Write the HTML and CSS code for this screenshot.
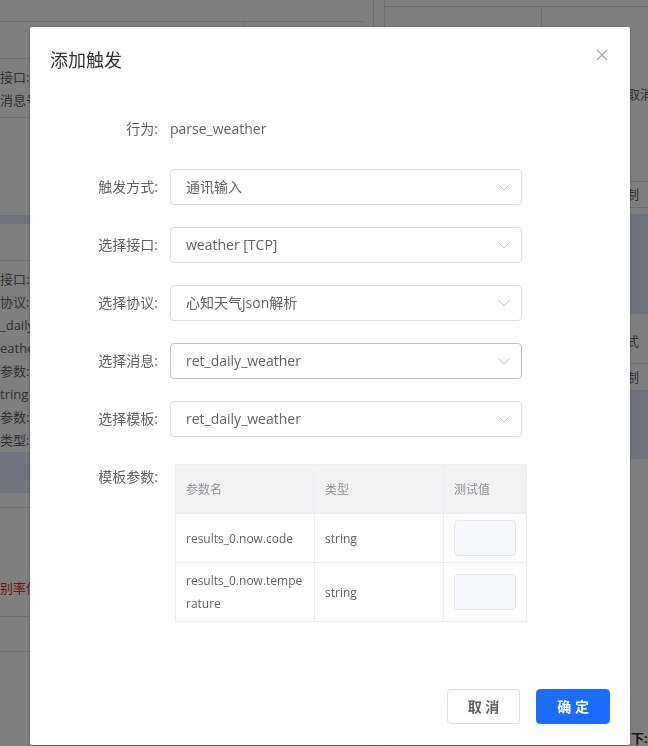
FILE: index.html
```html
<!DOCTYPE html>
<html lang="zh-CN">
<head>
<meta charset="utf-8">
<title>添加触发</title>
<link rel="stylesheet" href="styles.css">
</head>
<body>
<div class="page">
  <div class="pl">
    <div class="pl-r1"></div>
    <div class="pl-r2"><div class="pl-r2-cell"></div></div>
    <div class="pl-r3 bg-text">
      <div>接口:</div>
      <div>消息号:</div>
    </div>
    <div class="pl-r4"></div>
    <div class="band pl-r5"></div>
    <div class="pl-r6"></div>
    <div class="pl-r7 bg-text">
      <div>接口:</div>
      <div>协议:</div>
      <div>_daily</div>
      <div>eather</div>
      <div>参数:</div>
      <div>tring</div>
      <div>参数:</div>
      <div>类型:</div>
    </div>
    <div class="band pl-r8"></div>
    <div class="pl-r9"></div>
    <div class="pl-r10 bg-text"><div class="red">别率低</div></div>
    <div class="pl-r11"></div>
    <div class="pl-r12"></div>
  </div>
  <div class="sep"></div>
  <div class="pr">
    <div class="pr-r1"></div>
    <div class="pr-r2"><div class="pr-r2-cell"></div><div class="pr-text pr-text-a">取消</div></div>
    <div class="pr-r3 pr-text">控制</div>
    <div class="pr-r4"></div>
    <div class="band pr-r5"></div>
    <div class="pr-r6 pr-text">方式</div>
    <div class="pr-r7 pr-text">控制</div>
    <div class="band pr-r8"></div>
    <div class="pr-r9"></div>
    <div class="pr-r10 pr-text">下:三</div>
  </div>
</div>

<div class="mask"></div>

<div class="dialog">
  <div class="dialog-header">
    <span class="dialog-title">添加触发</span>
    <button class="dialog-close" type="button" aria-label="关闭">
      <svg width="12" height="12" viewBox="0 0 12 12"><path d="M1 1 L11 11 M11 1 L1 11" stroke="#a3a6ad" stroke-width="1.2" fill="none"/></svg>
    </button>
  </div>
  <div class="dialog-body">
    <div class="form-item">
      <label class="form-label">行为:</label>
      <div class="form-content"><span class="plain">parse_weather</span></div>
    </div>
    <div class="form-item">
      <label class="form-label">触发方式:</label>
      <div class="form-content">
        <div class="select"><span>通讯输入</span><svg class="arrow" width="12" height="7" viewBox="0 0 12 7"><polyline points="0.5,0.5 6,6 11.5,0.5" fill="none" stroke="#c0c4cc" stroke-width="1"/></svg></div>
      </div>
    </div>
    <div class="form-item">
      <label class="form-label">选择接口:</label>
      <div class="form-content">
        <div class="select"><span>weather [TCP]</span><svg class="arrow" width="12" height="7" viewBox="0 0 12 7"><polyline points="0.5,0.5 6,6 11.5,0.5" fill="none" stroke="#c0c4cc" stroke-width="1"/></svg></div>
      </div>
    </div>
    <div class="form-item">
      <label class="form-label">选择协议:</label>
      <div class="form-content">
        <div class="select"><span>心知天气json解析</span><svg class="arrow" width="12" height="7" viewBox="0 0 12 7"><polyline points="0.5,0.5 6,6 11.5,0.5" fill="none" stroke="#c0c4cc" stroke-width="1"/></svg></div>
      </div>
    </div>
    <div class="form-item">
      <label class="form-label">选择消息:</label>
      <div class="form-content">
        <div class="select select-hover"><span>ret_daily_weather</span><svg class="arrow" width="12" height="7" viewBox="0 0 12 7"><polyline points="0.5,0.5 6,6 11.5,0.5" fill="none" stroke="#c0c4cc" stroke-width="1"/></svg></div>
      </div>
    </div>
    <div class="form-item">
      <label class="form-label">选择模板:</label>
      <div class="form-content">
        <div class="select"><span>ret_daily_weather</span><svg class="arrow" width="12" height="7" viewBox="0 0 12 7"><polyline points="0.5,0.5 6,6 11.5,0.5" fill="none" stroke="#c0c4cc" stroke-width="1"/></svg></div>
      </div>
    </div>
    <div class="form-item">
      <label class="form-label">模板参数:</label>
      <div class="form-content">
        <div class="ptable">
          <div class="cell th">参数名</div>
          <div class="cell th">类型</div>
          <div class="cell th">测试值</div>
          <div class="cell">results_0.now.code</div>
          <div class="cell">string</div>
          <div class="cell"><div class="tinput"></div></div>
          <div class="cell">results_0.now.temperature</div>
          <div class="cell">string</div>
          <div class="cell"><div class="tinput"></div></div>
        </div>
      </div>
    </div>
  </div>
  <div class="dialog-footer">
    <button class="btn" type="button">取 消</button>
    <button class="btn btn-primary" type="button">确 定</button>
  </div>
</div>
</body>
</html>
```
FILE: styles.css
```css
html, body {
  margin: 0;
  padding: 0;
}
body {
  width: 648px;
  height: 746px;
  overflow: hidden;
  position: relative;
  background: #fff;
  font-family: "Open Sans", "Noto Sans CJK SC", sans-serif;
  color: #606266;
}

/* ---------- background page ---------- */
.page {
  display: flex;
  height: 746px;
  overflow: hidden;
}
.pl {
  width: 364px;
  flex: none;
}
.sep {
  width: 10px;
  flex: none;
  margin-left: 9px;
  border-left: 1px solid #dcdfe6;
  border-right: 1px solid #dcdfe6;
}
.pr {
  flex: 1;
  overflow: hidden;
}
.band {
  background: #e2e9f8;
}
.bg-text {
  font-size: 13px;
  line-height: 23px;
  color: #606266;
  white-space: nowrap;
}
.red {
  color: #f01e1e;
}
.pl-r1 { height: 21px; border-bottom: 1px solid #dcdfe6; }
.pl-r2 { height: 36px; border-bottom: 1px solid #dcdfe6; }
.pl-r2-cell { width: 243px; height: 100%; border-right: 1px solid #dcdfe6; }
.pl-r3 { padding: 7px 0 5px; border-bottom: 1px solid #dcdfe6; }
.pl-r4 { height: 97px; }
.pl-r5 { height: 9px; }
.pl-r6 { height: 36px; border-bottom: 1px solid #dcdfe6; }
.pl-r7 { padding-top: 7px; }
.pl-r8 { height: 41px; }
.pl-r9 { height: 14px; border-bottom: 1px solid #dcdfe6; }
.pl-r10 { padding: 69px 0 16px; border-bottom: 1px solid #dcdfe6; }
.pl-r11 { height: 34px; border-bottom: 1px solid #dcdfe6; }
.pl-r12 { height: 90px; }

.pr-text {
  font-size: 13px;
  line-height: 23px;
  color: #606266;
  white-space: nowrap;
  padding-left: 228px;
}
.pr-r1 { height: 6px; border-bottom: 1px solid #dcdfe6; }
.pr-r2 { height: 174px; border-bottom: 1px solid #dcdfe6; position: relative; }
.pr-r2-cell { width: 156px; height: 100%; border-right: 1px solid #dcdfe6; position: absolute; left: 0; top: 0; }
.pr-text-a { padding-top: 76px; padding-left: 242px; }
.pr-r3 { height: 25px; line-height: 25px; border-bottom: 1px solid #dcdfe6; }
.pr-r4 { height: 6px; }
.pr-r5 { height: 100px; }
.pr-r6 { height: 49px; line-height: 54px; border-bottom: 1px solid #dcdfe6; }
.pr-r7 { height: 26px; line-height: 26px; border-bottom: 1px solid #dcdfe6; }
.pr-r8 { height: 68px; }
.pr-r9 { height: 268px; }
.pr-r10 { font-weight: 700; color: #303133; padding-left: 246px; }

.mask {
  position: fixed;
  inset: 0;
  background: rgba(0, 0, 0, 0.5);
}

/* ---------- dialog ---------- */
.dialog {
  position: absolute;
  top: 27px;
  left: 30px;
  width: 600px;
  background: #fff;
  border-radius: 2px;
  box-shadow: 0 1px 3px rgba(0, 0, 0, 0.3);
}
.dialog-header {
  position: relative;
  padding: 20px 20px 10px;
}
.dialog-title {
  display: block;
  font-size: 18px;
  line-height: 24px;
  color: #303133;
  font-family: "Noto Sans CJK SC", sans-serif;
}
.dialog-close {
  position: absolute;
  top: 20px;
  right: 20px;
  width: 16px;
  height: 16px;
  padding: 0;
  border: 0;
  background: transparent;
  display: flex;
  align-items: center;
  justify-content: center;
}
.dialog-body {
  padding: 30px 20px;
}
.form-item {
  display: flex;
  margin-bottom: 22px;
}
.form-label {
  width: 120px;
  flex: none;
  box-sizing: border-box;
  padding-right: 12px;
  text-align: right;
  font-size: 14px;
  line-height: 36px;
  color: #606266;
}
.form-content {
  flex: 1;
  font-size: 14px;
  line-height: 36px;
}
.plain {
  color: #606266;
}
.select {
  width: 352px;
  height: 36px;
  box-sizing: border-box;
  border: 1px solid #dcdfe6;
  border-radius: 4px;
  display: flex;
  align-items: center;
  justify-content: space-between;
  padding: 0 11px 0 15px;
  color: #606266;
  font-size: 14px;
}
.select-hover {
  border-color: #c0c4cc;
}
.arrow {
  display: block;
  flex: none;
}

.ptable {
  margin: 5px 0 0 5px;
  display: grid;
  grid-template-columns: 139px 129px 83px;
  border-top: 1px solid #ebeef5;
  border-left: 1px solid #ebeef5;
  width: max-content;
}
.cell {
  box-sizing: border-box;
  border-right: 1px solid #ebeef5;
  border-bottom: 1px solid #ebeef5;
  padding: 6px 10px;
  font-size: 12px;
  line-height: 23px;
  color: #606266;
  display: flex;
  align-items: center;
  word-break: break-all;
}
.th {
  background: #f2f2f2;
  color: #909399;
  padding: 12px 10px;
  line-height: 24px;
  font-family: "Noto Sans CJK SC", sans-serif;
}
.tinput {
  width: 62px;
  height: 36px;
  box-sizing: border-box;
  background: #f5f7fa;
  border: 1px solid #e4e7ed;
  border-radius: 4px;
}

.dialog-footer {
  display: flex;
  justify-content: flex-end;
  gap: 16px;
  padding: 15px 20px 21px;
}
.btn {
  height: 35px;
  padding: 0 20px;
  box-sizing: border-box;
  border: 1px solid #dcdfe6;
  border-radius: 4px;
  background: #fff;
  color: #606266;
  font-family: "Open Sans", "Noto Sans CJK SC", sans-serif;
  font-size: 14px;
  font-weight: 600;
  line-height: 1;
  white-space: pre;
}
.btn-primary {
  background: #1a6dff;
  border-color: #1a6dff;
  color: #fff;
}
```
